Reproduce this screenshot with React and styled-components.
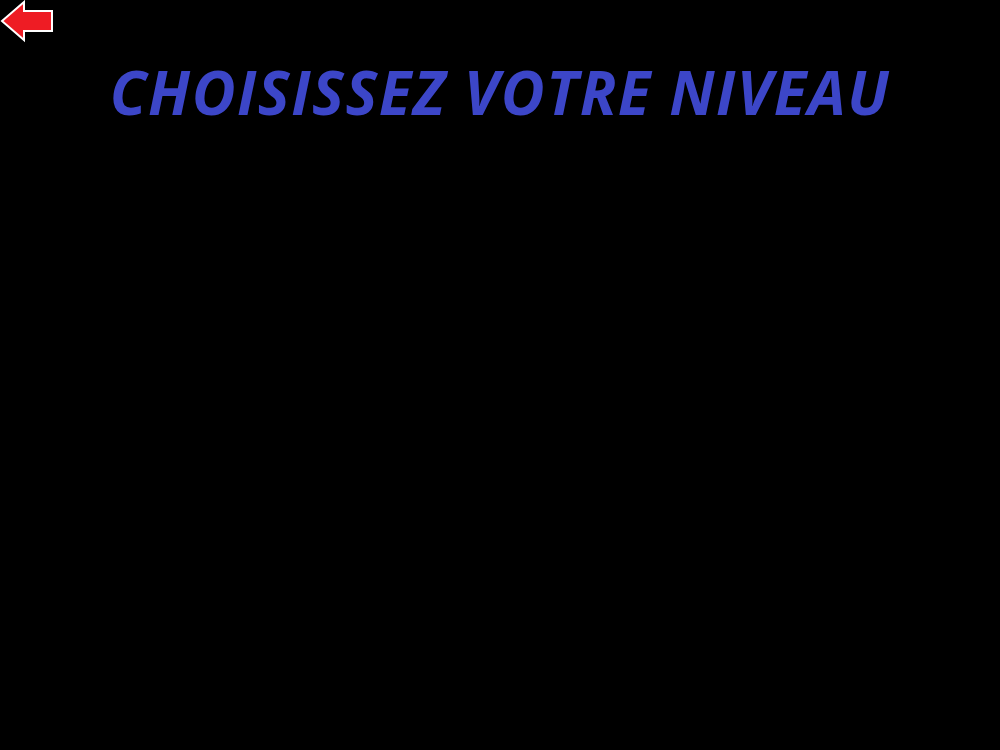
import { createGlobalStyle, styled } from 'styled-components';

const GlobalStyle = createGlobalStyle`
  html, body {
    margin: 0;
    padding: 0;
    background: #000000;
  }
  body {
    font-family: "Open Sans", "Noto Sans", sans-serif;
  }
`;

const Screen = styled.div`
  width: 1000px;
  height: 750px;
  background: #000000;
  display: flex;
  flex-direction: column;
  overflow: hidden;
`;

const TopBar = styled.div`
  height: 44px;
  display: flex;
  align-items: flex-start;
`;

const BackButton = styled.button`
  width: 54px;
  height: 44px;
  padding: 0;
  border: none;
  background: transparent;
  cursor: pointer;
  display: flex;

  svg {
    display: block;
  }
`;

const Title = styled.h1`
  margin: 18px 0 0;
  text-align: center;
  font-family: "Open Sans", "Noto Sans", sans-serif;
  font-weight: 700;
  font-style: italic;
  font-size: 60px;
  line-height: 1;
  letter-spacing: 1.6px;
  color: #3c46c8;
`;

const App = () => {
  return (
    <>
      <GlobalStyle />
      <Screen>
        <TopBar>
          <BackButton aria-label="Retour">
            <svg width="54" height="44" viewBox="0 0 54 44">
              <polygon
                points="2,21 24,2 24,11 52,11 52,31 24,31 24,40"
                fill="#ee1c24"
                stroke="#ffffff"
                strokeWidth="2"
                strokeLinejoin="miter"
              />
            </svg>
          </BackButton>
        </TopBar>
        <Title>CHOISISSEZ VOTRE NIVEAU</Title>
      </Screen>
    </>
  );
};

export default App;
